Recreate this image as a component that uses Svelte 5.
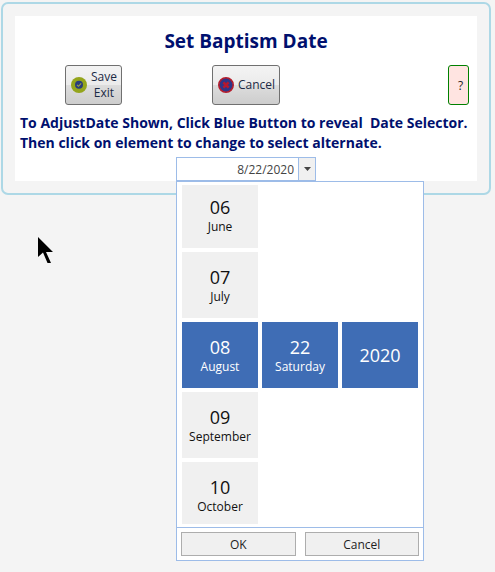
<script>
  const monthNames = ['January', 'February', 'March', 'April', 'May', 'June', 'July',
    'August', 'September', 'October', 'November', 'December'];
  const dayNames = ['Sunday', 'Monday', 'Tuesday', 'Wednesday', 'Thursday', 'Friday', 'Saturday'];

  let open = $state(true);
  let month = $state(8);
  let day = $state(22);
  let year = $state(2020);

  // two months either side of the selected one
  let months = $derived([-2, -1, 0, 1, 2].map((n) => ((month - 1 + n + 12) % 12) + 1));
  let weekday = $derived(dayNames[new Date(year, month - 1, day).getDay()]);
  let dateText = $derived(`${month}/${day}/${year}`);

  const pad = (n) => String(n).padStart(2, '0');
</script>

<main>
  <section class="panel">
    <div class="content">
      <h1>Set Baptism Date</h1>

      <div class="toolbar">
        <button class="tool" type="button">
          <svg width="16" height="16" viewBox="0 0 16 16" aria-hidden="true">
            <circle cx="8" cy="8" r="8" fill="#94a51c" />
            <circle cx="8" cy="7.7" r="4" fill="#293c7c" />
            <path d="M6 7.8l1.5 1.5L10.2 6.4" fill="none" stroke="#9aa640" stroke-width="1.1" />
          </svg>
          <span>Save<br />Exit</span>
        </button>
        <button class="tool" type="button">
          <svg width="16" height="16" viewBox="0 0 16 16" aria-hidden="true">
            <circle cx="8" cy="8" r="7.2" fill="#2e3588" stroke="#b51d2c" stroke-width="1.6" />
            <path d="M5.4 5.4l5.2 5.2M10.6 5.4l-5.2 5.2" stroke="#b5182e" stroke-width="2.6" />
          </svg>
          <span>Cancel</span>
        </button>
        <button class="help" type="button">?</button>
      </div>

      <label class="hint" for="date">To AdjustDate Shown, Click Blue Button to reveal&nbsp; Date Selector.<br />Then click on element to change to select alternate.</label>

      <div class="picker">
        <input id="date" type="text" value={dateText} readonly />
        <button class="drop" type="button" aria-label="Show date selector" onclick={() => (open = !open)}>
          <svg width="7" height="4" viewBox="0 0 7 4" aria-hidden="true">
            <path d="M0 0h7L3.5 4z" fill="#444" />
          </svg>
        </button>

        {#if open}
          <div class="popup">
            <div class="wheels">
              <div class="wheel">
                {#each months as m}
                  <button class="tile" class:selected={m === month} type="button" onclick={() => (month = m)}>
                    <b>{pad(m)}</b>
                    <small>{monthNames[m - 1]}</small>
                  </button>
                {/each}
              </div>
              <div class="wheel">
                <button class="tile selected" type="button">
                  <b>{pad(day)}</b>
                  <small>{weekday}</small>
                </button>
              </div>
              <div class="wheel">
                <button class="tile selected" type="button"><b>{year}</b></button>
              </div>
            </div>
            <div class="actions">
              <button type="button" onclick={() => (open = false)}>OK</button>
              <button type="button" onclick={() => (open = false)}>Cancel</button>
            </div>
          </div>
        {/if}
      </div>
    </div>
  </section>

  <svg class="pointer" width="18" height="30" viewBox="0 0 18 30" aria-hidden="true">
    <path d="M1 2v20l5-4.5 4.5 10.5h3.5L9 17h7z" fill="#000" />
  </svg>
</main>

<style>
  :global(body) {
    background: #f4f4f4;
  }

  main {
    position: relative;
    box-sizing: border-box;
    min-height: 100vh;
    padding: 2px 4px 0 1px;
    font-family: "Open Sans", "Noto Sans", sans-serif;
    font-size: 12px;
    color: #1e1e1e;
  }

  button,
  input {
    box-sizing: border-box;
    margin: 0;
    padding: 0;
    font: inherit;
    color: inherit;
  }

  .panel {
    padding: 12px;
    border: 2px solid #add8e6;
    border-radius: 7px;
  }

  .content {
    padding: 12px 5px 0;
    background: #fff;
  }

  h1 {
    margin: 0;
    font-size: 19px;
    line-height: 26px;
    text-align: center;
    color: #00106e;
  }

  .toolbar {
    display: flex;
    gap: 90px;
    padding: 11px 3px 0 45px;
  }

  .tool {
    display: flex;
    align-items: center;
    gap: 4px;
    height: 40px;
    padding: 0 4px 0 5px;
    border: 1px solid #707070;
    border-radius: 3px;
    background: linear-gradient(#f3f3f3, #ebebeb 50%, #dddddd 50%, #cdcdcd);
    line-height: 16px;
    color: #1b2a45;
  }

  .help {
    width: 21px;
    height: 40px;
    margin-left: auto;
    padding-left: 4px;
    border: 1px solid #008000;
    border-radius: 3px;
    background: #ffe4e1;
  }

  .hint {
    display: block;
    padding-top: 8px;
    font-size: 14px;
    font-weight: bold;
    line-height: 20px;
    white-space: nowrap;
    color: #00106e;
  }

  .picker {
    position: relative;
    display: flex;
    width: 140px;
    height: 24px;
    margin: 4px 0 0 156px;
  }

  .picker input {
    flex: 1;
    min-width: 0;
    padding-right: 4px;
    border: 1px solid #9dbce8;
    background: #fff;
    text-align: right;
    color: #444;
    outline: none;
  }

  .drop {
    display: flex;
    align-items: center;
    justify-content: center;
    width: 17px;
    border: 1px solid #9dbce8;
    border-left: 0;
    background: #f0f0f0;
  }

  .popup {
    position: absolute;
    top: 100%;
    left: 0;
    box-sizing: border-box;
    width: 248px;
    border: 1px solid #9dbce8;
    background: #fff;
  }

  .wheels {
    display: flex;
    gap: 4px;
    height: 339px;
    padding: 3px 5px;
    border-bottom: 1px solid #9dbce8;
  }

  .wheel {
    display: flex;
    flex: 1;
    flex-direction: column;
    justify-content: center;
    gap: 4px;
    overflow: hidden;
  }

  .tile {
    display: flex;
    flex: none;
    flex-direction: column;
    align-items: center;
    justify-content: center;
    height: 66px;
    border: 0;
    background: #f0f0f0;
    color: #111;
  }

  .tile b {
    font-size: 18px;
    font-weight: normal;
    line-height: 24px;
  }

  .tile small {
    font-size: 12px;
    line-height: 16px;
  }

  .tile.selected {
    background: #3f6db5;
    color: #fff;
  }

  .actions {
    display: flex;
    gap: 9px;
    padding: 4px;
  }

  .actions button {
    flex: 1;
    height: 24px;
    border: 1px solid #adadad;
    background: #f0f0f0;
  }

  .pointer {
    position: absolute;
    top: 235px;
    left: 37px;
  }
</style>
